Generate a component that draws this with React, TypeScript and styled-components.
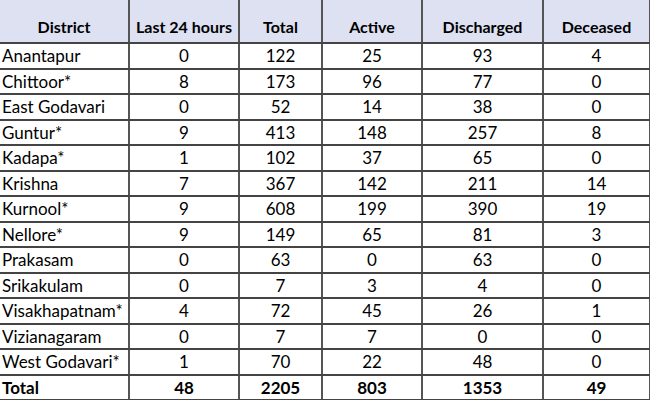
import React from "react";
import styled, { createGlobalStyle } from "styled-components";

const Global = createGlobalStyle`
  html, body { margin: 0; padding: 0; background: #fff; overflow: hidden; }
  body { font-family: Lato, "Open Sans", sans-serif; color: #000; }
`;

const Table = styled.table`
  width: 650px;
  height: 400px;
  border-collapse: collapse;
  table-layout: fixed;
  font-family: Lato, "Open Sans", sans-serif;
  color: #000;
`;

const HeadRow = styled.tr`
  height: 43px;
  background: #dde1f2;
`;

const Th = styled.th`
  font-size: 16px;
  font-weight: 700;
  text-align: center;
  vertical-align: bottom;
  padding: 0 2px 6px;
  border-right: 2px solid #555;
  border-bottom: 2px solid #444;
  white-space: nowrap;
`;

const Tr = styled.tr`
  height: 25.5px;
`;

const Td = styled.td<{ $left?: boolean; $bold?: boolean }>`
  font-size: 17px;
  font-weight: ${(p) => (p.$bold ? 700 : 400)};
  text-align: ${(p) => (p.$left ? "left" : "center")};
  padding: 0 0 0 ${(p) => (p.$left ? "2px" : "0")};
  border-right: 2px solid #555;
  border-bottom: 2px solid #444;
  white-space: nowrap;
  overflow: hidden;
  line-height: 1;
`;

const cols = [129, 110, 83, 100, 121, 107];
const headers = ["District", "Last 24 hours", "Total", "Active", "Discharged", "Deceased"];

const rows: (string | number)[][] = [
  ["Anantapur", 0, 122, 25, 93, 4],
  ["Chittoor*", 8, 173, 96, 77, 0],
  ["East Godavari", 0, 52, 14, 38, 0],
  ["Guntur*", 9, 413, 148, 257, 8],
  ["Kadapa*", 1, 102, 37, 65, 0],
  ["Krishna", 7, 367, 142, 211, 14],
  ["Kurnool*", 9, 608, 199, 390, 19],
  ["Nellore*", 9, 149, 65, 81, 3],
  ["Prakasam", 0, 63, 0, 63, 0],
  ["Srikakulam", 0, 7, 3, 4, 0],
  ["Visakhapatnam*", 4, 72, 45, 26, 1],
  ["Vizianagaram", 0, 7, 7, 0, 0],
  ["West Godavari*", 1, 70, 22, 48, 0],
];

export default function App() {
  return (
    <>
      <Global />
      <Table>
        <colgroup>
          {cols.map((w, i) => (
            <col key={i} style={{ width: w }} />
          ))}
        </colgroup>
        <thead>
          <HeadRow>
            {headers.map((h) => (
              <Th key={h}>{h}</Th>
            ))}
          </HeadRow>
        </thead>
        <tbody>
          {rows.map((r) => (
            <Tr key={r[0] as string}>
              {r.map((c, i) => (
                <Td key={i} $left={i === 0}>
                  {c}
                </Td>
              ))}
            </Tr>
          ))}
          <Tr>
            {["Total", 48, 2205, 803, 1353, 49].map((c, i) => (
              <Td key={i} $left={i === 0} $bold>
                {c}
              </Td>
            ))}
          </Tr>
        </tbody>
      </Table>
    </>
  );
}
